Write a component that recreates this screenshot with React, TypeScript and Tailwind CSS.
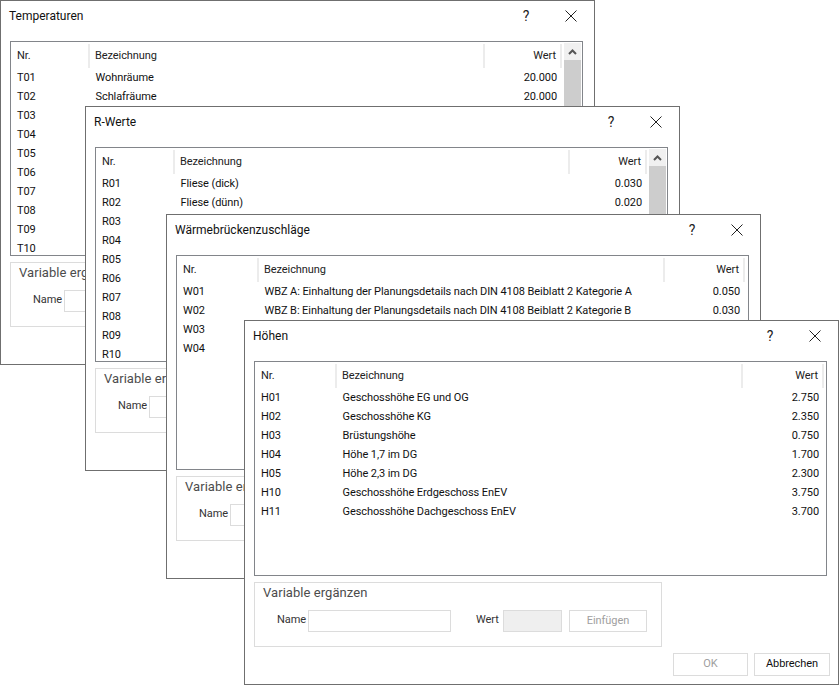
import React from 'react';

interface Row {
  nr: string;
  name?: string;
  wert?: string;
}

interface DialogProps {
  title: string;
  className: string;
  rows: Row[];
  cols: string;
  scrollbar?: boolean;
}

const temperaturen: Row[] = [
  { nr: 'T01', name: 'Wohnräume', wert: '20.000' },
  { nr: 'T02', name: 'Schlafräume', wert: '20.000' },
  { nr: 'T03' },
  { nr: 'T04' },
  { nr: 'T05' },
  { nr: 'T06' },
  { nr: 'T07' },
  { nr: 'T08' },
  { nr: 'T09' },
  { nr: 'T10' },
];

const rWerte: Row[] = [
  { nr: 'R01', name: 'Fliese (dick)', wert: '0.030' },
  { nr: 'R02', name: 'Fliese (dünn)', wert: '0.020' },
  { nr: 'R03' },
  { nr: 'R04' },
  { nr: 'R05' },
  { nr: 'R06' },
  { nr: 'R07' },
  { nr: 'R08' },
  { nr: 'R09' },
  { nr: 'R10' },
];

const waermebruecken: Row[] = [
  { nr: 'W01', name: 'WBZ A: Einhaltung der Planungsdetails nach DIN 4108 Beiblatt 2 Kategorie A', wert: '0.050' },
  { nr: 'W02', name: 'WBZ B: Einhaltung der Planungsdetails nach DIN 4108 Beiblatt 2 Kategorie B', wert: '0.030' },
  { nr: 'W03' },
  { nr: 'W04' },
];

const hoehen: Row[] = [
  { nr: 'H01', name: 'Geschosshöhe EG und OG', wert: '2.750' },
  { nr: 'H02', name: 'Geschosshöhe KG', wert: '2.350' },
  { nr: 'H03', name: 'Brüstungshöhe', wert: '0.750' },
  { nr: 'H04', name: 'Höhe 1,7 im DG', wert: '1.700' },
  { nr: 'H05', name: 'Höhe 2,3 im DG', wert: '2.300' },
  { nr: 'H10', name: 'Geschosshöhe Erdgeschoss EnEV', wert: '3.750' },
  { nr: 'H11', name: 'Geschosshöhe Dachgeschoss EnEV', wert: '3.700' },
];

const Dialog: React.FC<DialogProps> = ({ title, className, rows, cols, scrollbar }) => {
  return (
    <div className={`absolute w-[595px] h-[365px] bg-white border border-[#6f6f6f] flex flex-col ${className}`}>
      <div className="h-[30px] shrink-0 flex items-center pl-[8px] text-[#111]">
        <span className="flex-1 text-[12px] tracking-normal">{title}</span>
        <span className="w-[14px] text-center text-[14px] text-[#222]">?</span>
        <svg className="ml-[32px] mr-[17px]" width="12" height="12" viewBox="0 0 12 12">
          <path d="M0.5 0.5 L11.5 11.5 M11.5 0.5 L0.5 11.5" stroke="#222" strokeWidth="1" fill="none" />
        </svg>
      </div>
      <div className="mt-[10px] ml-[9px] w-[573px] h-[215px] shrink-0 border border-[#82858a] flex overflow-hidden">
        <div className="flex-1 min-w-0">
          <div className={`grid ${cols} h-[24px] mt-[2px] text-[#222] items-center`}>
            <span className="pl-[6px] h-full flex items-center border-r-2 border-[#ececec]">Nr.</span>
            <span className="pl-[5px] h-full flex items-center border-r-2 border-[#ececec]">Bezeichnung</span>
            <span className="pr-[4px] h-full flex items-center justify-end border-r-2 border-[#ececec]">Wert</span>
          </div>
          <div className="mt-[1px]">
            {rows.map((row) => (
              <div key={row.nr} className={`grid ${cols} h-[19px] items-center text-[#111]`}>
                <span className="pl-[6px]">{row.nr}</span>
                <span className="pl-[5.5px] whitespace-nowrap">{row.name}</span>
                <span className="pr-[5px] text-right">{row.wert}</span>
              </div>
            ))}
          </div>
        </div>
        {scrollbar && (
          <div className="w-[17px] mt-[1px] mr-[1px] shrink-0 flex flex-col">
            <div className="h-[17px] bg-[#f0f0f0] flex items-center justify-center">
              <svg width="9" height="6" viewBox="0 0 9 6">
                <path d="M1 5 L4.5 1.5 L8 5" stroke="#555" strokeWidth="2" fill="none" />
              </svg>
            </div>
            <div className="flex-1 bg-[#cdcdcd]" />
          </div>
        )}
      </div>
      <div className="mt-[6px] ml-[9px] w-[408px] h-[65px] shrink-0 border border-[#dcdcdc] pl-[8px] pt-[2px]">
        <div className="text-[13px] leading-[16px] text-[#4c4c4c] tracking-[0.06px]">Variable ergänzen</div>
        <div className="flex items-center mt-[9px] h-[22px]">
          <span className="w-[43px] text-right text-[#333] -translate-y-px">Name</span>
          <div className="ml-[2px] w-[143px] h-[22px] border border-[#dcdcdc]" />
          <span className="ml-[25px] w-[25px] text-[#333] -translate-y-px">Wert</span>
          <div className="ml-[2px] w-[59px] h-[22px] border border-[#dcdcdc] bg-[#efefef]" />
          <div className="ml-[7px] w-[78px] h-[22px] border border-[#dcdcdc] flex items-center justify-center text-[#a0a0a0]">
            Einfügen
          </div>
        </div>
      </div>
      <div className="mt-[6px] flex justify-end gap-[6px] pr-[8px]">
        <div className="w-[75px] h-[23px] border border-[#dcdcdc] flex items-center justify-center text-[#a0a0a0]">OK</div>
        <div className="w-[76px] h-[23px] border border-[#dcdcdc] flex items-center justify-center text-[#111]">Abbrechen</div>
      </div>
    </div>
  );
};

export default function App() {
  return (
    <div className="relative w-[839px] h-[685px] bg-white overflow-hidden text-[11px] tracking-[-0.08px] font-['Roboto',sans-serif]">
      <Dialog title="Temperaturen" className="left-0 top-0" rows={temperaturen} cols="grid-cols-[79px_395px_77px]" scrollbar />
      <Dialog title="R-Werte" className="left-[85px] top-[106px]" rows={rWerte} cols="grid-cols-[79px_395px_77px]" scrollbar />
      <Dialog title="Wärmebrückenzuschläge" className="left-[166px] top-[214px]" rows={waermebruecken} cols="grid-cols-[82px_406px_80px]" />
      <Dialog title="Höhen" className="left-[244px] top-[320px]" rows={hoehen} cols="grid-cols-[82px_406px_81px]" />
    </div>
  );
}
